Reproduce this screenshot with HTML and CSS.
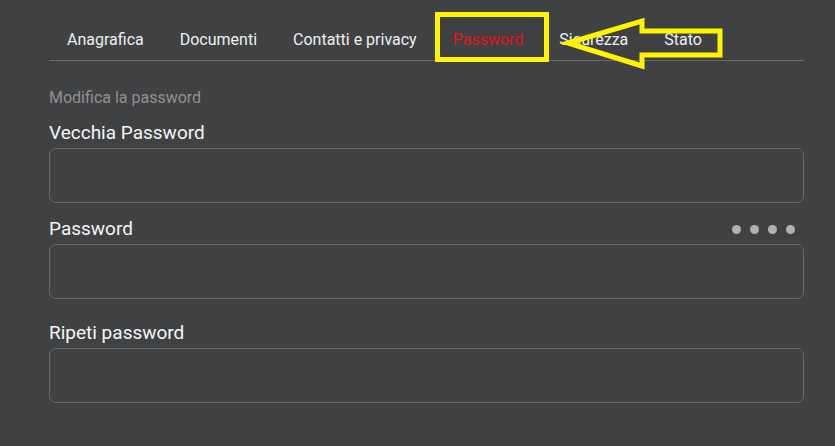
FILE: index.html
```html
<!DOCTYPE html>
<html lang="it">
<head>
    <meta charset="utf-8">
    <title>Password</title>
    <link rel="stylesheet" href="styles.css">
</head>
<body>
<div class="page">
    <nav class="tabs">
        <a class="tab" href="#">Anagrafica</a>
        <a class="tab" href="#">Documenti</a>
        <a class="tab" href="#">Contatti e privacy</a>
        <a class="tab active" href="#">Password</a>
        <a class="tab" href="#">Sicurezza</a>
        <a class="tab" href="#">Stato</a>
    </nav>

    <form class="pwdform">
        <p class="hint">Modifica la password</p>

        <div class="field first">
            <label for="oldpw">Vecchia Password</label>
            <input id="oldpw" type="password">
        </div>

        <div class="field">
            <div class="labelrow">
                <label for="newpw">Password</label>
                <span class="strength"><i></i><i></i><i></i><i></i></span>
            </div>
            <input id="newpw" type="password">
        </div>

        <div class="field last">
            <label for="reppw">Ripeti password</label>
            <input id="reppw" type="password">
        </div>
    </form>

    <!-- annotazione gialla sopra la scheda -->
    <svg class="mark" width="835" height="90" viewBox="0 0 835 90">
        <rect x="437.5" y="14.5" width="109" height="45" fill="none" stroke="#fff500" stroke-width="5"/>
        <polygon points="568,43 642,21 642,31 720,31 720,55 642,55 642,66" fill="none" stroke="#fff500" stroke-width="5"/>
    </svg>
</div>
</body>
</html>
```

FILE: styles.css
```css
body {
    margin: 0;
    background: #404143;
    font-family: Roboto, "Liberation Sans", sans-serif;
    color: #f0f1f3;
}

.page {
    position: relative;
    width: 755px;
    padding-left: 49px;
    min-height: 446px;
}

.tabs {
    display: flex;
    border-bottom: 1px solid #6a6a6a;
}

.tab {
    display: block;
    padding: 30px 18px 10px;
    font-size: 16px;
    line-height: 20px;
    color: #eef0f2;
    text-decoration: none;
    margin-bottom: -1px;
    border-bottom: 1px solid transparent;
}

.tab.active {
    color: #e3131b;
    border-bottom: 2px solid #e3131b;
    padding-bottom: 9px;
}

.hint {
    margin: 27px 0 0;
    font-size: 16px;
    line-height: 20px;
    color: #8f9092;
}

.field {
    margin-top: 15px;
}

.field.first {
    margin-top: 14px;
}

.field.last {
    margin-top: 23px;
}

.field label {
    display: block;
    font-size: 19px;
    line-height: 22px;
    font-weight: 400;
    color: #f4f5f7;
}

.labelrow {
    display: flex;
    justify-content: space-between;
    align-items: center;
}

.strength {
    display: flex;
    gap: 9px;
    margin-right: 9px;
}

.strength i {
    width: 9px;
    height: 9px;
    border-radius: 50%;
    background: #b1b1b1;
}

.field input {
    display: block;
    box-sizing: border-box;
    width: 100%;
    height: 55px;
    margin-top: 4px;
    background: #404143;
    border: 1px solid #68696b;
    border-radius: 7px;
    color: #f0f1f3;
    font-size: 16px;
    padding: 0 14px;
    outline: none;
}

.mark {
    position: absolute;
    left: 0;
    top: 0;
    pointer-events: none;
}
```
